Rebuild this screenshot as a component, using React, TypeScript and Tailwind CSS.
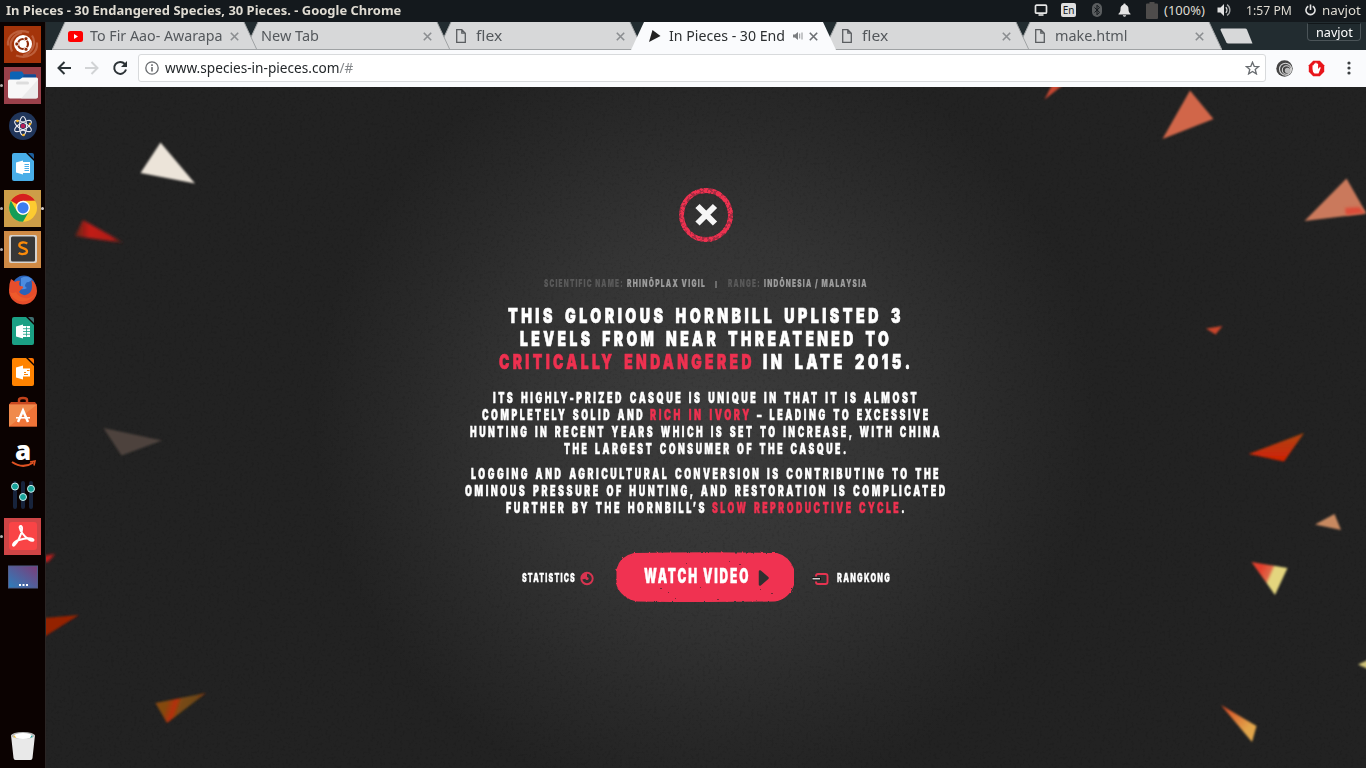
import { useLayoutEffect, useRef, useState } from "react";
import type { ReactNode } from "react";

/* Condenses (or widens) one line of type to a given width. */
function Fit({ w, className = "", children }: { w: number; className?: string; children: ReactNode }) {
  const ref = useRef<HTMLSpanElement>(null);
  const [scale, setScale] = useState(1);
  useLayoutEffect(() => {
    if (ref.current) setScale(w / ref.current.offsetWidth);
  }, [w]);
  return (
    <span className={`block shrink-0 whitespace-nowrap ${className}`} style={{ width: w }}>
      <span ref={ref} className="inline-block origin-left" style={{ transform: `scaleX(${scale})` }}>
        {children}
      </span>
    </span>
  );
}

/* ---------- top panel ---------- */
function TopPanel() {
  return (
    <header className="flex h-[22px] shrink-0 items-center bg-[#14191d] pl-[6px] pr-[5px] text-[13px] leading-[20px] text-[#dfdbd2]">
      <Fit w={395} className="pb-[2px] font-bold">In Pieces - 30 Endangered Species, 30 Pieces. - Google Chrome</Fit>
      <div className="ml-auto flex items-center pb-[2px]">
        <svg width="14" height="12" viewBox="0 0 14 12" fill="none" stroke="#e4e4e4">
          <rect x="1.5" y="1.2" width="11" height="8" rx="1" strokeWidth="1.7" />
          <path d="M4.5 11H9.5" strokeWidth="1.6" />
        </svg>
        <span className="ml-[13px] flex h-[14px] w-[15px] items-center justify-center rounded-[2px] bg-[#dfdfdf] text-[10px] text-[#14191d]">En</span>
        <svg className="ml-[15px]" width="12" height="14" viewBox="0 0 12 14">
          <rect x="1" width="10" height="14" rx="5" fill="#5a5d5f" />
          <path d="M3.5 4.5L8.5 9.3L6 11.8V2.2L8.5 4.7L3.5 9.5" stroke="#14191d" fill="none" />
        </svg>
        <svg className="ml-[15px]" width="13" height="14" viewBox="0 0 13 14" fill="#e4e4e4">
          <path d="M6.5 0.5a1.2 1.2 0 0 1 1.2 1.3C9.8 2.4 10.5 4.2 10.5 6c0 2.6.8 3.8 2 4.8v.7H.5v-.7c1.2-1 2-2.2 2-4.8 0-1.8.7-3.6 2.8-4.2A1.2 1.2 0 0 1 6.5.5zM4.8 12.3h3.4a1.7 1.4 0 0 1-3.4 0z" />
        </svg>
        <svg className="ml-[14px]" width="14" height="18" viewBox="0 0 14 18" fill="#4e4c4b">
          <path d="M4.5 1h5v1.5H12q1 0 1 1V17q0 1-1 1H2q-1 0-1-1V3.500q0-1 1-1h2.500z" />
        </svg>
        <Fit w={41} className="ml-[5px]">(100%)</Fit>
        <svg className="ml-[12px]" width="14" height="14" viewBox="0 0 14 14" fill="none" stroke="#e0e0e0" strokeWidth="1.3">
          <path d="M0.5 4.5H3.5L7 1V13L3.5 9.5H.5z" fill="#e0e0e0" stroke="none" />
          <path d="M8.8 4.2a4 4 0 0 1 0 5.600" />
          <path d="M10 1.6a6.5 6.5 0 0 1 0 10.800" stroke="#a4a6a7" />
        </svg>
        <Fit w={46} className="ml-[15px]">1:57 PM</Fit>
        <svg className="ml-[13px]" width="11" height="12" viewBox="0 0 11 12" fill="none" stroke="#e4e4e4" strokeWidth="1.6">
          <path d="M3.3 2.2a4.5 4.5 0 1 0 4.400 0M5.500 0.500V6" />
        </svg>
        <Fit w={39} className="ml-[6px]">navjot</Fit>
      </div>
    </header>
  );
}

/* ---------- launcher ---------- */
function Tile({ bg = "", running = false, focused = false, children }: { bg?: string; running?: boolean; focused?: boolean; children: ReactNode }) {
  return (
    <div className="flex h-[37px] items-center">
      <span className={`mr-px h-[3px] w-[3px] rounded-full ${running ? "bg-[#b5adab]" : ""}`} />
      <div className={`h-[37px] w-[37px] ${bg}`}>
        <svg width="37" height="37" viewBox="0 0.5 37 37">{children}</svg>
      </div>
      <span className={`h-[3px] w-[3px] rounded-full ${focused ? "bg-[#d5cdcb]" : ""}`} />
    </div>
  );
}

function OfficeDoc({ fill, fold, children }: { fill: string; fold: string; children: ReactNode }) {
  return (
    <>
      <path d="M10 4.5H22L30 12.500V30.500q0 2-2 2H10q-2 0-2-2V6.500q0-2 2-2z" fill={fill} />
      <path d="M24 4.5H28q2 0 2 2V10.500z" fill={fold} />
      <path d="M12 14L19 12V26L12 24z" fill="#fff" />
      {children}
    </>
  );
}

function Launcher() {
  return (
    <nav className="flex w-[46px] shrink-0 flex-col gap-1 border-r border-[#2a2524] bg-[#0b0201] pb-1 pt-1">
      <Tile bg="bg-[#a4340a]">
        <g fill="none" stroke="#d58a6c" strokeWidth="2.2" opacity=".5">
          <path d="M4 20C3 9 13 3 25 7M33 17C34 28 24 34 12 30M8 26C4 17 9 9 18 7M28 10C33 18 28 28 19 30" />
        </g>
        <circle cx="19" cy="18.5" r="9" fill="#fff" />
        <circle cx="19" cy="18.5" r="5" fill="none" stroke="#8f2a08" strokeWidth="2.2" />
        <g fill="#8f2a08" stroke="#fff" strokeWidth=".8">
          <circle cx="12.8" cy="18.5" r="2" /><circle cx="22" cy="13.2" r="2" /><circle cx="22" cy="23.8" r="2" />
        </g>
      </Tile>
      <Tile bg="bg-[#9a404a]" running>
        <path d="M6 17V7q0-2 2-2h10l2 3h11q1 0 1 1v8z" fill="#0b63b5" />
        <path d="M20 8h11q1 0 1 1v4H18z" fill="#124b94" />
        <path d="M4 14.5q0-1.5 1.5-1.5h10l3-2h14q1.500 0 1.500 1.500V30q0 2-2 2H6q-2 0-2-2z" fill="#f8f8f8" />
        <path d="M34 13V30q0 2-2 2H17z" fill="#e6e6e6" opacity=".7" />
        <rect x="12" y="15" width="13" height="3" rx="1.5" fill="#ddd" />
      </Tile>
      <Tile>
        <circle cx="19" cy="18.5" r="14" fill="#20355a" />
        <g fill="none" stroke="#e9e9ef" strokeWidth="1.1">
          <ellipse cx="19" cy="18.5" rx="3.5" ry="9.5" />
          <ellipse cx="19" cy="18.5" rx="3.5" ry="9.5" transform="rotate(60 19 18.5)" />
          <ellipse cx="19" cy="18.5" rx="3.5" ry="9.5" transform="rotate(-60 19 18.5)" />
        </g>
        <circle cx="19" cy="18.5" r="2.3" fill="#b81f5a" />
        <g fill="#f5b324"><circle cx="13.5" cy="13.5" r="1.3" /><circle cx="26" cy="16.5" r="1.3" /><circle cx="19.5" cy="27.5" r="1.3" /></g>
      </Tile>
      <Tile>
        <OfficeDoc fill="#49aee8" fold="#1c5f9d">
          <path d="M19 13.5H26V24.5H19z" fill="#fff" /><path d="M20.5 16H25M20.5 18H25M20.5 20H25M20.5 22H25" stroke="#49aee8" />
        </OfficeDoc>
      </Tile>
      <Tile bg="bg-[#cd9d48]" running focused>
        <circle cx="19" cy="18.3" r="14" fill="#fdcb31" />
        <path d="M6.88 11.3A14 14 0 0 1 31.12 11.3L19 11.8A7 7 0 0 0 12.9 14.8z" fill="#d51f1f" />
        <path d="M6.88 11.3A14 14 0 0 0 19 32.3L25.06 21.8A7 7 0 0 1 12.94 21.8z" fill="#139d58" />
        <path d="M19 11.3H31.12L25 21.8z" fill="#fdcb31" />
        <circle cx="19" cy="18.3" r="7" fill="#fff" /><circle cx="19" cy="18.3" r="5.6" fill="#3c7df0" />
      </Tile>
      <Tile bg="bg-[#cf8a45]" running>
        <rect x="5" y="4.5" width="28" height="28" rx="2" fill="#d6d3cf" />
        <rect x="7" y="6" width="24" height="25" rx="1.5" fill="#373737" />
        <path d="M23.2 13.2C21 11.2 15.3 11.5 15.3 14.8C15.3 18.2 23 17 23 20.7C23 24 17 24.2 14.7 22.3" fill="none" stroke="#fb8b0a" strokeWidth="2.3" />
      </Tile>
      <Tile>
        <circle cx="20" cy="15.5" r="11.5" fill="#2b62b8" />
        <path d="M17 6.5q6-3 11 1-2 4-5 3-4 4 0 6-3 2-6 1z" fill="#4c8ce0" />
        <path d="M7 7.5q2 1 4 3 3-2 5-1-2 3 0 5 4 0 3 2-3 2-4 4 4 5 9 2 4-2 4-8 0-5-1-6 6 3 6 11A14 14 0 0 1 5 18.5Q5 12 7 7.5z" fill="#e64d2b" />
        <path d="M5.5 20.5A14 14 0 0 0 32 20.5Q28 27.5 21 26.5T12 20.5q-3 2-6.5 0z" fill="#ee5a2a" />
      </Tile>
      <Tile>
        <OfficeDoc fill="#1ba084" fold="#3e6f70">
          <path d="M19 13.5H26V24.5H19z" fill="#fff" /><path d="M19 16.2H26M19 19H26M19 21.8H26M22.5 14V24" stroke="#1ba084" strokeWidth=".8" />
        </OfficeDoc>
      </Tile>
      <Tile>
        <OfficeDoc fill="#ff8300" fold="#ff7400">
          <path d="M19 15H26V23H19z" fill="#fff" /><path d="M20 19H22M20 21H24M23 17H25.5" stroke="#ff8300" />
        </OfficeDoc>
      </Tile>
      <Tile>
        <path d="M15 9V5.5q0-2 4-2t4 2V9" fill="none" stroke="#c2421b" strokeWidth="2.5" />
        <path d="M5 10L7 7.5H31L33 10V32H5z" fill="#c84820" />
        <path d="M5 10H33V32H5z" fill="#ef7438" /><path d="M5 10H33L5 32z" fill="#f19455" opacity=".7" />
        <path d="M14 27.5L19 16L24 27.5" fill="none" stroke="#fff" strokeWidth="2.5" />
        <path d="M12 23.3H26" stroke="#fff" strokeWidth="1.6" />
      </Tile>
      <Tile>
        <text x="11" y="24.5" fontFamily="Open Sans" fontWeight="800" fontSize="26" fill="#fff">a</text>
        <path d="M8 26.5Q19 34 29.5 27" fill="none" stroke="#e05222" strokeWidth="2" />
        <path d="M26 26.5L31 25.5L30 30" fill="none" stroke="#e05222" strokeWidth="1.6" />
      </Tile>
      <Tile>
        <g stroke="#17233b" strokeWidth="4" strokeLinecap="round"><path d="M11 6.5V30.5M19 6.5V30.5M27 6.5V30.5" /></g>
        <g fill="#18a39a" stroke="#cfeeee" strokeWidth="1"><circle cx="11" cy="10" r="3.5" /><circle cx="19" cy="20.5" r="3.5" /><circle cx="27" cy="12.3" r="3.5" /></g>
      </Tile>
      <Tile bg="bg-[#cf4546]" running>
        <rect x="5" y="4.5" width="28" height="28" rx="3" fill="#f94446" />
        <path d="M17 8.5C20 10 16 22 10.5 27.5C8 30 8 24.5 15 22.5C22 20 29 20 29.5 22.5C29 25 22 21 18.5 16C15 11 15 8 17 8.5z" fill="none" stroke="#fff" strokeWidth="2" strokeLinejoin="round" />
      </Tile>
      <Tile>
        <defs><linearGradient id="desk" x1="0" y1="1" x2="1" y2="0"><stop offset="0" stopColor="#2c7fbd" /><stop offset="1" stopColor="#7d3c78" /></linearGradient></defs>
        <rect x="4.5" y="7.5" width="29" height="22" fill="url(#desk)" stroke="#505c88" />
        <path d="M15 26.5h2M18.5 26.5h2M22 26.5h2" stroke="#fff" strokeWidth="2.2" />
      </Tile>
      <div className="mt-auto">
        <Tile>
          <path d="M7 8.5H31L28.5 31.5q-.2 2-2 2H11.500q-1.800 0-2-2z" fill="#e9e9e9" />
          <ellipse cx="19" cy="9" rx="12" ry="3.5" fill="#b9b9b9" />
          <ellipse cx="19" cy="9.5" rx="9.5" ry="3" fill="#fff" />
          <path d="M10 8.5l2.500 3-3-1z" fill="#f0c03d" /><path d="M28 8.500l-2 3 2.500-1z" fill="#19a7a0" />
        </Tile>
      </div>
    </nav>
  );
}

/* ---------- browser chrome ---------- */
function PageIcon() {
  return (
    <svg className="ml-[2px] mr-[10px] shrink-0" width="10" height="14" viewBox="0 0 10 14" fill="none" stroke="#5a5d60" strokeWidth="1.3">
      <path d="M.7.7H5.8L9.3 4.2V13.3H.7zM5.8.7V4.2H9.3" />
    </svg>
  );
}

function Close({ dark = false }: { dark?: boolean }) {
  return (
    <svg className="shrink-0" width="9" height="9" viewBox="0 0 9 9" stroke={dark ? "#6b6f73" : "#8b8e91"} strokeWidth="1.6">
      <path d="M.8.8L8.2 8.2M8.2.8L.8 8.2" />
    </svg>
  );
}

function Tab({ icon, title, w, order, active = false, fade = "", audio }: { icon?: ReactNode; title: string; w: number; order: string; active?: boolean; fade?: string; audio?: ReactNode }) {
  return (
    <div className={`relative -ml-3 flex h-[28px] w-[205px] shrink-0 items-center pl-[16px] pr-[18px] ${order}`}>
      <svg className="absolute inset-0" width="205" height="28" viewBox="0 0 205 28">
        <path d="M0 28L13 0H192L205 28z" fill={active ? "#fafbfd" : "#d7d8d9"} />
        {!active && <path d="M0 27.5H205M205 28L192 0M0 28L13 0" stroke="#9fa2a4" fill="none" />}
      </svg>
      <div className="relative flex w-full items-center">
        {icon}
        <Fit w={w} className={`pb-[2px] text-[15px] leading-5 ${active ? "text-[#2c2f31]" : "text-[#54585c]"}`}>{title}</Fit>
        {fade && <span className={`-ml-[36px] h-5 w-[36px] shrink-0 bg-linear-to-r ${fade}`} />}
        <span className="ml-auto flex items-center gap-[6px]">{audio}<Close dark={active} /></span>
      </div>
    </div>
  );
}

function TabStrip() {
  return (
    <div className="flex h-[28px] shrink-0 bg-[#222c30] pl-[18px]">
      <Tab order="z-[6]" w={133} title="To Fir Aao- Awarapa" fade="from-[#d7d8d9]/0 to-[#d7d8d9]"
        icon={<svg className="mr-[7px] shrink-0" width="15" height="11" viewBox="0 0 15 11"><rect width="15" height="11" rx="2.5" fill="#f00" /><path d="M6 3V8L10 5.5z" fill="#fff" /></svg>} />
      <Tab order="z-[5]" w={58} title="New Tab" />
      <Tab order="z-[4]" w={26} title="flex" icon={<PageIcon />} />
      <Tab order="z-[7]" active w={116} title="In Pieces - 30 End" fade="from-[#fafbfd]/0 to-[#fafbfd]"
        icon={<svg className="mr-[8px] ml-[2px] shrink-0" width="12" height="12" viewBox="0 0 12 12"><path d="M3.5 0L11.5 6L0 12z" fill="#222" /></svg>}
        audio={<svg width="10" height="10" viewBox="0 0 10 10"><path d="M0 3.5H2L5 1V9L2 6.5H0z" fill="#7b7e80" /><path d="M6.7 2.5V7.5M9 1.5V8.5" stroke="#8f9294" /></svg>} />
      <Tab order="z-[3]" w={26} title="flex" icon={<PageIcon />} />
      <Tab order="z-[2]" w={73} title="make.html" icon={<PageIcon />} />
      <svg className="-ml-[2px] mt-[6px]" width="33" height="17" viewBox="0 0 33 17"><path d="M0.5 2q-.3-1.5 1-1.5H25q1.5 0 2 1.2L32.5 15.5H8.5q-1.5 0-2.2-1.2z" fill="#d7d8d9" /></svg>
      <div className="ml-auto mr-[5px] mt-[1px] flex h-[18px] w-[54px] justify-center rounded-b-[4px] border border-t-[#11171a] border-[#4b5458] bg-[#202a2e] text-[13px] leading-[17px] text-white">
        <Fit w={37}>navjot</Fit>
      </div>
    </div>
  );
}

function Toolbar() {
  return (
    <div className="flex h-[37px] shrink-0 items-center bg-[#fafbfd] pb-[1px] pl-[11px] pr-[15px]">
      <svg width="14" height="14" viewBox="0 0 14 14" fill="none" stroke="#2b3236" strokeWidth="2"><path d="M14 7H1.5M7.5 1L1.5 7L7.5 13" /></svg>
      <svg className="ml-[14px]" width="14" height="14" viewBox="0 0 14 14" fill="none" stroke="#d1d3d5" strokeWidth="2"><path d="M0 7H12.5M6.5 1L12.5 7L6.5 13" /></svg>
      <svg className="ml-[13px]" width="16" height="16" viewBox="0 0 16 16" fill="none" stroke="#2b3236" strokeWidth="2"><path d="M12.8 4A6 6 0 1 0 14 9.5" /><path d="M15 1V7H9z" fill="#2b3236" stroke="none" /></svg>
      <div className="ml-[10px] flex h-[28px] flex-1 items-center rounded-[3px] border border-[#d8dadc] bg-white pl-[6px] pr-[5px] text-[14px] leading-5">
        <svg width="14" height="14" viewBox="0 0 14 14" fill="none" stroke="#696c6f"><circle cx="7" cy="7" r="6.2" strokeWidth="1.3" /><path d="M7 6V10.5M7 3.3V4.9" strokeWidth="1.6" /></svg>
        <Fit w={188} className="ml-[6px] text-[#24282b]">www.species-in-pieces.com<span className="text-[#85888b]">/#</span></Fit>
        <svg className="ml-auto" width="15" height="14" viewBox="0 0 15 14" fill="none" stroke="#686c70" strokeWidth="1.3"><path d="M7.5 1.2L9.2 5.3L13.7 5.6L10.2 8.5L11.4 12.9L7.5 10.5L3.6 12.9L4.8 8.5L1.3 5.6L5.8 5.3z" /></svg>
      </div>
      <svg className="ml-[10px]" width="17" height="17" viewBox="0 0 17 17"><circle cx="8.5" cy="8.5" r="8.2" fill="#444" /><g fill="none" stroke="#d5d5d5" strokeWidth="1.1"><circle cx="9.5" cy="9.2" r="6" /><circle cx="10.5" cy="10" r="4.2" /></g><circle cx="11.5" cy="10.5" r="2.7" fill="#b9b9b9" /></svg>
      <svg className="ml-[15px]" width="17" height="17" viewBox="0 0 17 17"><path d="M5.2.8H11.8L16.2 5.2V11.8L11.8 16.2H5.2L.8 11.8V5.2z" fill="#e8151b" /><path d="M4.5 9V5.5q.8-1 1.3 0V4q.8-1 1.4 0V3q.8-1 1.5 0V4q.8-1 1.4 0V9l1.8-2q1.3 0 .6 1.5L10.5 13.5H6.5Q4.5 12 4.5 9z" fill="#fff" /></svg>
      <svg className="ml-[22px]" width="4" height="14" viewBox="0 0 4 14" fill="#3c4043"><circle cx="2" cy="2" r="1.6" /><circle cx="2" cy="7" r="1.6" /><circle cx="2" cy="12" r="1.6" /></svg>
    </div>
  );
}

/* ---------- page ---------- */
/* Drifting shards; the viewBox is the page's own area offset by the window chrome. */
function Shards() {
  return (
    <svg className="absolute inset-0" width="1320" height="681" viewBox="46 87 1320 681">
      <defs>
        <filter id="soft" x="-10%" y="-10%" width="120%" height="120%"><feGaussianBlur stdDeviation=".85" /></filter>
        <filter id="softer" x="-20%" y="-20%" width="140%" height="140%"><feGaussianBlur stdDeviation="1.5" /></filter>
        <filter id="grain" x="0" y="0" width="100%" height="100%">
          <feTurbulence type="fractalNoise" baseFrequency=".35" numOctaves="3" seed="4" />
          <feColorMatrix values="0 0 0 0 0  0 0 0 0 0  0 0 0 0 0  0 0 0 -5 2.3" />
        </filter>
        <linearGradient id="s1" x1="0" y1="0" x2="1" y2="0"><stop offset="0" stopColor="#5d2119" /><stop offset=".3" stopColor="#c21e17" /><stop offset=".75" stopColor="#b01b15" /><stop offset="1" stopColor="#302018" /></linearGradient>
        <linearGradient id="s2" x1="0" y1="1" x2="0" y2="0"><stop offset=".1" stopColor="#cc2406" /><stop offset="1" stopColor="#ad460b" /></linearGradient>
        <linearGradient id="s3" x1="0" y1="0" x2="1" y2=".4"><stop offset=".3" stopColor="#e2412d" /><stop offset=".55" stopColor="#e0694a" /><stop offset=".62" stopColor="#e4d57e" /></linearGradient>
        <linearGradient id="s4" x1="0" y1="0" x2="1" y2="1"><stop offset=".1" stopColor="#d95026" /><stop offset=".7" stopColor="#e2a64b" /></linearGradient>
        <linearGradient id="s5" x1="0" y1="0" x2="1" y2=".2"><stop offset="0" stopColor="#a8380c" /><stop offset=".12" stopColor="#85480f" /><stop offset=".28" stopColor="#84480f" /><stop offset=".45" stopColor="#b62f09" /><stop offset=".55" stopColor="#7a4b14" /><stop offset=".8" stopColor="#6d4613" /><stop offset="1" stopColor="#8b2f0d" /></linearGradient>
      </defs>
      <rect x="46" y="87" width="1320" height="681" filter="url(#grain)" opacity=".07" />
      <g filter="url(#soft)">
        <path d="M160.5 142.5L195 183.5L140.5 173z" fill="#ece4d9" />
        <path d="M103.5 428L162 440.5L121.5 455.500z" fill="#4d433d" />
        <path d="M44 618L79 615L44 637z" fill="#942104" />
        <path d="M155.5 703L206 693L167 723z" fill="url(#s5)" />
        <path d="M1044.500 99.500L1052 85H1063z" fill="#c84732" />
        <path d="M1190 90.500L1213.500 119L1162.500 139z" fill="#d1664a" />
        <path d="M1346.500 178.500L1366.500 213.500L1304.500 221z" fill="#ca795b" />
        <path d="M1304 433L1284 461.500L1248.500 454z" fill="url(#s2)" />
        <path d="M1334.500 514L1341 530L1315 524.500z" fill="#c88961" />
        <path d="M1251.500 562L1287.500 568L1275 595z" fill="url(#s3)" />
        <path d="M1358 664.500L1368 660V669z" fill="#cfc278" />
        <path d="M1221 705L1256.500 726L1252 742z" fill="url(#s4)" />
        <path d="M1206 328.500L1222.500 326L1215.500 334.500z" fill="#c8452c" />
      </g>
      <g filter="url(#softer)">
        <path d="M83 220L124 243L75 236z" fill="url(#s1)" />
        <path d="M1345 208L1359 207L1365 213L1346 215z" fill="#dc4c38" />
        <path d="M44 556L55 554L48 562L44 562z" fill="#c81f1c" />
      </g>
    </svg>
  );
}

function Red({ children }: { children: ReactNode }) {
  return <span className="text-[#ee3150]">{children}</span>;
}

function Article() {
  return (
    <main className="relative mx-auto flex w-[490px] flex-col items-center pt-[101px] font-black text-white">
      <svg width="54" height="54" viewBox="0 0 54 54">
        <defs>
          <filter id="worn" x="-5%" y="-5%" width="110%" height="110%">
            <feTurbulence type="fractalNoise" baseFrequency=".35" numOctaves="3" seed="9" result="n" />
            <feColorMatrix in="n" values="0 0 0 0 0  0 0 0 0 0  0 0 0 0 0  0 0 0 -9 5.3" result="m" />
            <feComposite in="SourceGraphic" in2="m" operator="in" result="c" />
            <feDisplacementMap in="c" in2="n" scale="1" />
          </filter>
        </defs>
        <circle cx="27" cy="27" r="24.5" fill="none" stroke="#a52c42" strokeWidth="4.8" />
        <circle cx="27" cy="27" r="24.5" fill="none" stroke="#ee3150" strokeWidth="4.8" filter="url(#worn)" />
        <path d="M18.5 18L36 35.5M36 18L18.5 35.5" stroke="#f6f6f6" strokeWidth="6" />
      </svg>
      <div className="mt-[34px] flex text-[10.5px] leading-[16px] tracking-[2px] [-webkit-text-stroke:0.2px]">
        <Fit w={80} className="text-[#5a5a5a]">SCIENTIFIC NAME:</Fit>
        <Fit w={79} className="ml-[3px] text-[#9d9d9d]">RHINŌPLAX VIGIL</Fit>
        <span className="ml-[9px] mr-[11px] mt-[5px] h-[7px] w-[2px] bg-[#6c6c6c]" />
        <Fit w={33} className="text-[#5a5a5a]">RANGE:</Fit>
        <Fit w={104} className="ml-[3px] text-[#9d9d9d]">INDŌNESIA / MALAYSIA</Fit>
      </div>
      <h1 className="mt-[12px] flex flex-col items-center text-[20.5px] leading-[23px] tracking-[5px] [word-spacing:4px] [-webkit-text-stroke:0.7px]">
        <Fit w={396}>THIS GLORIOUS HORNBILL UPLISTED 3</Fit>
        <Fit w={372}>LEVELS FROM NEAR THREATENED TO</Fit>
        <span className="flex">
          <Fit w={256}><Red>CRITICALLY ENDANGERED</Red></Fit>
          <Fit w={151} className="ml-[8px]">IN LATE 2015.</Fit>
        </span>
      </h1>
      <p className="mt-[16px] flex flex-col items-center text-[14px] leading-[17px] tracking-[4px] [word-spacing:2px] [-webkit-text-stroke:0.5px]">
        <Fit w={426}>ITS HIGHLY-PRIZED CASQUE IS UNIQUE IN THAT IT IS ALMOST</Fit>
        <span className="flex">
          <Fit w={163}>COMPLETELY SOLID AND</Fit>
          <Fit w={102} className="ml-[5px]"><Red>RICH IN IVORY</Red></Fit>
          <Fit w={174} className="ml-[5px]">– LEADING TO EXCESSIVE</Fit>
        </span>
        <Fit w={472}>HUNTING IN RECENT YEARS WHICH IS SET TO INCREASE, WITH CHINA</Fit>
        <Fit w={285}>THE LARGEST CONSUMER OF THE CASQUE.</Fit>
      </p>
      <p className="mt-[8px] flex flex-col items-center text-[14px] leading-[17px] tracking-[4px] [word-spacing:2px] [-webkit-text-stroke:0.5px]">
        <Fit w={470}>LOGGING AND AGRICULTURAL CONVERSION IS CONTRIBUTING TO THE</Fit>
        <Fit w={483}>OMINOUS PRESSURE OF HUNTING, AND RESTORATION IS COMPLICATED</Fit>
        <span className="flex">
          <Fit w={201}>FURTHER BY THE HORNBILL’S</Fit>
          <Fit w={195} className="ml-[5px]"><Red>SLOW REPRODUCTIVE CYCLE</Red>.</Fit>
        </span>
      </p>
      <div className="mt-[35px] flex items-center text-[11.5px] tracking-[2px] [-webkit-text-stroke:0.3px]">
        <Fit w={54} className="mt-[5px]">STATISTICS</Fit>
        <svg className="ml-[4px] mt-[4px]" width="15" height="15" viewBox="0 0 15 15"><circle cx="7" cy="7.5" r="5.7" fill="none" stroke="#d93450" strokeWidth="1.9" /><path d="M7 7.5V2A5.5 5.5 0 0 0 1.5 8.5z" fill="#d93450" /><circle cx="7" cy="7.5" r="1.6" fill="#d93450" /></svg>
        <div className="relative ml-[20px] flex h-[51px] w-[180px] items-center pl-[29px]">
          <svg className="absolute inset-0" width="180" height="51" viewBox="0 0 180 51">
            <defs><filter id="rough" x="-3%" y="-6%" width="106%" height="112%"><feTurbulence type="fractalNoise" baseFrequency=".3" numOctaves="3" seed="2" /><feDisplacementMap in="SourceGraphic" scale="2.5" /></filter></defs>
            <path d="M19 2Q90 .5 162 2Q174 5 179 18V34Q174 48 160 50.500Q90 51.500 22 50.500Q6 47 1.500 34V18Q5 5 19 2z" fill="#f03351" filter="url(#rough)" />
            <g fill="#7d2537"><rect x="71" y="12" width="1" height="1" /><rect x="124" y="13" width="2" height="1" /><rect x="114" y="10" width="1" height="1" /><rect x="45" y="37" width="2" height="1" /><rect x="85" y="36" width="1" height="1" /><rect x="53" y="41" width="1" height="1" /><rect x="145" y="38" width="1" height="1" /><rect x="60" y="47" width="1" height="1" /><rect x="102" y="48" width="2" height="1" /><rect x="156" y="42" width="2" height="1" /></g>
          </svg>
          <Fit w={106} className="relative pb-[1px] text-[19.5px] leading-[28px] tracking-[3px] [-webkit-text-stroke:0.4px]">WATCH VIDEO</Fit>
          <svg className="relative ml-[8px] mt-[2px]" width="11" height="16" viewBox="0 0 11 16"><path d="M2 1.5L9.5 8L2 14.5z" fill="#303030" stroke="#303030" strokeWidth="2.5" strokeLinejoin="round" /></svg>
        </div>
        <svg className="ml-[17px] mt-[5px]" width="17" height="12" viewBox="0 0 17 12"><path d="M4 3.5V3q0-2 2-2H13.5q2 0 2 2V9q0 2-2 2H6Q4 11 4 9V8.5" fill="none" stroke="#e53350" strokeWidth="1.9" /><path d="M0 5.8H9" stroke="#111" strokeWidth="3" /><path d="M.5 5.8H8" stroke="#fff" strokeWidth="1.2" /></svg>
        <Fit w={54} className="ml-[8px] mt-[5px]">RANGKONG</Fit>
      </div>
    </main>
  );
}

export default function App() {
  return (
    <div className="flex h-[768px] w-[1366px] flex-col overflow-hidden bg-black font-['Noto_Sans','Open_Sans',sans-serif]">
      <TopPanel />
      <div className="flex min-h-0 flex-1">
        <Launcher />
        <div className="flex min-w-0 flex-1 flex-col">
          <TabStrip />
          <Toolbar />
          <div className="relative flex-1 overflow-hidden bg-[radial-gradient(circle_at_660px_330px,#3c3c3c_0px,#343434_180px,#292929_300px,#222222_390px)] font-['Inter','Open_Sans',sans-serif]">
            <Shards />
            <Article />
          </div>
        </div>
      </div>
    </div>
  );
}
